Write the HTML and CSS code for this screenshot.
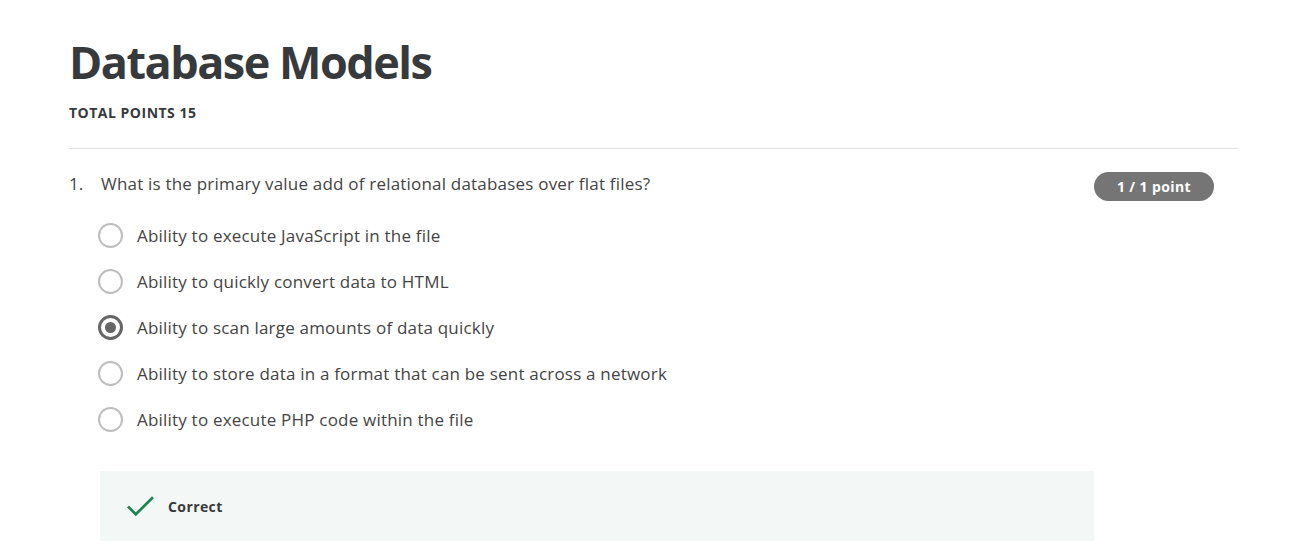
FILE: index.html
```html
<!DOCTYPE html>
<html lang="en">
<head>
<meta charset="utf-8">
<title>Database Models</title>
<link rel="stylesheet" href="styles.css">
</head>
<body>
<main class="page">
  <header class="quiz-header">
    <h1 class="title">Database Models</h1>
    <div class="total">TOTAL POINTS 15</div>
  </header>
  <section class="question">
    <div class="q-row">
      <span class="q-num">1.</span>
      <div class="q-body">
        <div class="q-top">
          <p class="q-text">What is the primary value add of relational databases over flat files?</p>
          <span class="badge">1 / 1 point</span>
        </div>
        <ul class="options">
          <li class="option"><span class="radio"></span><span>Ability to execute JavaScript in the file</span></li>
          <li class="option"><span class="radio"></span><span>Ability to quickly convert data to HTML</span></li>
          <li class="option"><span class="radio checked"></span><span>Ability to scan large amounts of data quickly</span></li>
          <li class="option"><span class="radio"></span><span>Ability to store data in a format that can be sent across a network</span></li>
          <li class="option"><span class="radio"></span><span>Ability to execute PHP code within the file</span></li>
        </ul>
        <div class="feedback">
          <svg class="check" width="29" height="22" viewBox="0 0 29 22"><path d="M2 11.5 L9.8 19.3 L27 2.3" fill="none" stroke="#1f8354" stroke-width="2.7"/></svg>
          <span class="fb-text">Correct</span>
        </div>
      </div>
    </div>
  </section>
</main>
</body>
</html>
```
FILE: styles.css
```css
* { box-sizing: border-box; }
body {
  margin: 0;
  background: #fff;
  font-family: "Open Sans", "Noto Sans", sans-serif;
  color: #373a3c;
}
.page {
  width: 1169px;
  margin-left: 69px;
  padding-top: 34px;
}
.quiz-header {
  padding-bottom: 26px;
  border-bottom: 1px solid #e1e1e1;
}
.title {
  margin: 0;
  font-size: 45px;
  line-height: 56px;
  font-weight: 700;
  letter-spacing: -1.5px;
  color: #373a3c;
}
.total {
  margin-top: 14px;
  font-size: 14px;
  line-height: 18px;
  font-weight: 700;
  letter-spacing: 0.5px;
  color: #373a3c;
}
.question { padding-top: 23px; }
.q-row { display: flex; }
.q-num {
  width: 32px;
  font-size: 17px;
  line-height: 24px;
  color: #444;
}
.q-body { flex: 1; }
.q-top {
  display: flex;
  justify-content: space-between;
  align-items: flex-start;
  padding-right: 24px;
}
.q-text {
  margin: 0;
  font-size: 17px;
  line-height: 24px;
  letter-spacing: 0.2px;
  color: #444;
}
.badge {
  margin-top: 0;
  background: #757575;
  color: #fff;
  font-size: 14px;
  font-weight: 700;
  letter-spacing: 0.4px;
  line-height: 29px;
  height: 29px;
  width: 120px;
  text-align: center;
  border-radius: 15px;
}
.options {
  list-style: none;
  margin: 11px 0 0 -3px;
  padding: 0;
}
.option {
  display: flex;
  align-items: center;
  gap: 14px;
  height: 46px;
  font-size: 17px;
  letter-spacing: 0.2px;
  color: #444;
}
.radio {
  flex: none;
  width: 25px;
  height: 25px;
  border: 2px solid #bdbdbd;
  border-radius: 50%;
  display: flex;
  align-items: center;
  justify-content: center;
}
.radio.checked {
  border: 3px solid #666;
}
.radio.checked::after {
  content: "";
  width: 11px;
  height: 11px;
  border-radius: 50%;
  background: #666;
}
.feedback {
  margin-top: 29px;
  margin-left: -1px;
  width: 994px;
  height: 70px;
  background: #f3f8f6;
  display: flex;
  align-items: center;
  padding-left: 26px;
  gap: 13px;
}
.fb-text {
  font-size: 14px;
  font-weight: 700;
  letter-spacing: 0.4px;
  color: #373a3c;
}
```
